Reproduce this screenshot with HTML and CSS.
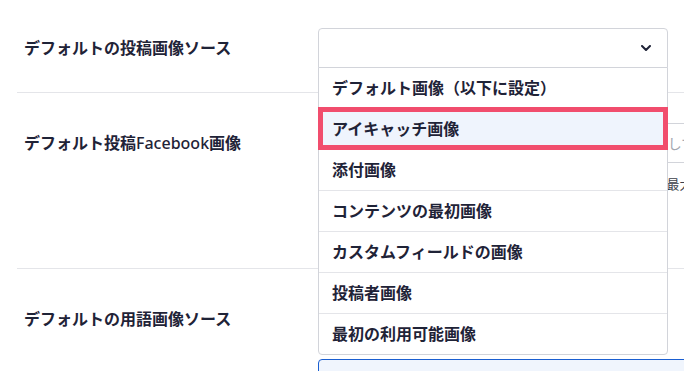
FILE: index.html
```html
<!DOCTYPE html>
<html lang="ja">

<head>
    <meta charset="UTF-8">
    <meta name="viewport" content="width=device-width, initial-scale=1.0">
    <title>画像設定</title>
    <link rel="stylesheet" href="styles.css">
</head>

<body>
    <div class="settings">
        <div class="row">
            <div class="label">デフォルトの投稿画像ソース</div>
            <div class="field">
                <div class="select-wrap">
                    <div class="select-box">
                        <svg class="chevron" width="10" height="6" viewBox="0 0 10 6">
                            <path d="M1 1l4 4 4-4" fill="none" stroke="#1f2337" stroke-width="2" stroke-linecap="round" stroke-linejoin="round"/>
                        </svg>
                    </div>
                    <ul class="select-list">
                        <li>デフォルト画像（以下に設定）</li>
                        <li class="active">アイキャッチ画像</li>
                        <li>添付画像</li>
                        <li>コンテンツの最初画像</li>
                        <li>カスタムフィールドの画像</li>
                        <li>投稿者画像</li>
                        <li>最初の利用可能画像</li>
                    </ul>
                </div>
            </div>
        </div>

        <div class="row">
            <div class="label">デフォルト投稿<span class="latin">Facebook</span>画像</div>
            <div class="field">
                <input class="text-input" type="text" placeholder="画像アドレスを入力するか、メディアから画像を選択してください">
                <div class="help">ソーシャルメディアで共有される際に使用される画像です。最大サイズは8MBです。</div>
                <div class="preview"></div>
            </div>
        </div>

        <div class="row">
            <div class="label">デフォルトの用語画像ソース</div>
            <div class="field">
                <div class="select-box plain"></div>
                <input class="text-input focused" type="text">
            </div>
        </div>
    </div>
</body>

</html>
```

FILE: styles.css
```css
body {
    margin: 0;
    background: #ffffff;
    font-family: "Noto Sans", "Noto Sans CJK JP", sans-serif;
    color: #1f2337;
    overflow: hidden;
}

.settings {
    padding-left: 17px;
    width: 820px;
}

.row {
    display: flex;
    align-items: flex-start;
    padding: 30px 0 24px;
    border-bottom: 1px solid #e4e5e9;
}

.row:first-child {
    padding-top: 28px;
}

.label {
    width: 294px;
    padding-left: 7px;
    height: 40px;
    line-height: 40px;
    font-size: 16px;
    font-weight: 700;
    white-space: nowrap;
}

.label .latin {
    font-weight: 500;
}

.field {
    display: flex;
    flex-direction: column;
}

.select-wrap {
    position: relative;
    width: 350px;
}

.select-box {
    box-sizing: border-box;
    width: 350px;
    height: 40px;
    border: 1px solid #d2d4da;
    border-radius: 4px 4px 0 0;
    background: #ffffff;
    display: flex;
    align-items: center;
    justify-content: flex-end;
    padding-right: 16px;
}

.select-box.plain {
    border-radius: 4px;
}

.select-list {
    position: absolute;
    top: 39px;
    left: 0;
    z-index: 5;
    box-sizing: border-box;
    width: 350px;
    margin: 0;
    padding: 0;
    list-style: none;
    background: #ffffff;
    border: 1px solid #d2d4da;
    border-radius: 0 0 4px 4px;
}

.select-list li {
    height: 40px;
    line-height: 40px;
    padding-left: 13px;
    font-size: 16px;
    font-weight: 700;
    border-top: 1px solid #e4e5e9;
}

.select-list li:first-child {
    border-top: none;
}

.select-list li.active {
    background: #eff4fd;
    outline: 5px solid #f14d6d;
    outline-offset: -4px;
}

.text-input {
    box-sizing: border-box;
    width: 480px;
    height: 40px;
    border: 1px solid #d2d4da;
    border-radius: 4px;
    padding: 0 14px;
    font-family: "Noto Sans CJK JP", sans-serif;
    font-size: 14px;
    background: #ffffff;
}

.text-input::placeholder {
    color: #a3a7b1;
}

.text-input.focused {
    margin-top: 20px;
    border-color: #1a5fd1;
    background: #f0f5fd;
}

.help {
    margin-top: 12px;
    line-height: 18px;
    font-family: "Noto Sans CJK JP", sans-serif;
    font-size: 13px;
    color: #3c3f4a;
    white-space: nowrap;
}

.preview {
    margin-top: 11px;
    width: 120px;
    height: 40px;
    background: #f3f4f6;
}
```
